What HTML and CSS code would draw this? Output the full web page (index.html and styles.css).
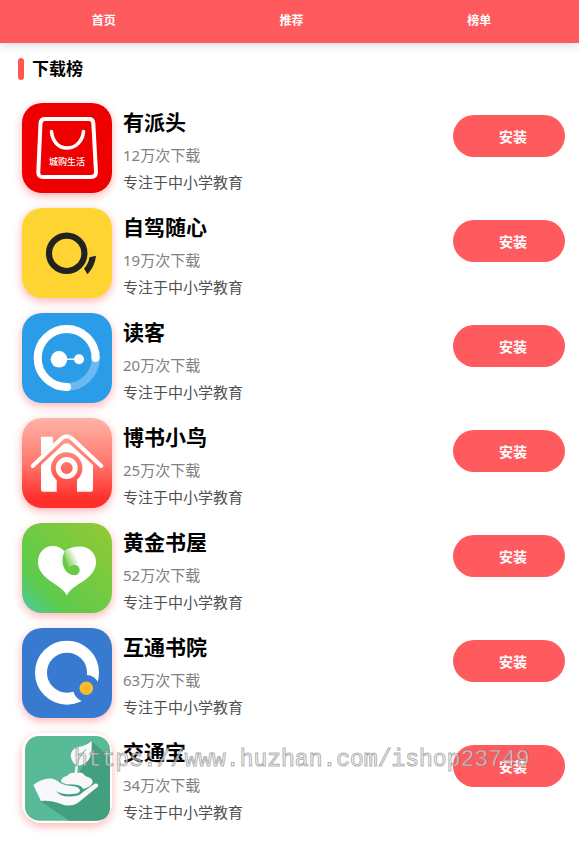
FILE: index.html
```html
<!DOCTYPE html>
<html lang="zh-CN">
<head>
    <meta charset="UTF-8">
    <meta name="viewport" content="width=device-width, initial-scale=1.0">
    <title>下载榜</title>
    <link rel="stylesheet" href="styles.css">
</head>
<body>
    <nav class="nav">
        <a href="#">首页</a>
        <a href="#">推荐</a>
        <a href="#">榜单</a>
    </nav>

    <main class="rank">
        <h1 class="rank-title">下载榜</h1>
        <ul class="app-list">
            <li class="app">
                <svg class="logo" viewBox="0 0 90 90">
                    <rect width="90" height="90" fill="#ee0000"/>
                    <path d="M23 16H67Q71 16 71.300 20L74 69Q74 74 69 74H21Q16 74 16.300 69L18.500 20Q19 16 23 16Z" fill="none" stroke="#fff" stroke-width="4"/>
                    <path d="M29.500 28.500C30.500 39 37 45 45 45S60.500 39 61.500 28.500" fill="none" stroke="#fff" stroke-width="3.500" stroke-linecap="round"/>
                    <text class="logo-text" x="45" y="62" text-anchor="middle">城购生活</text>
                </svg>
                <div class="info">
                    <h2 class="name">有派头</h2>
                    <p class="count">12万次下载</p>
                    <p class="desc">专注于中小学教育</p>
                </div>
                <button class="install">安装</button>
            </li>
            <li class="app">
                <svg class="logo" viewBox="0 0 90 90">
                    <rect width="90" height="90" fill="#fdd431"/>
                    <circle cx="44.700" cy="45.300" r="17.700" fill="none" stroke="#222" stroke-width="6.200"/>
                    <path d="M67.500 49.300L74 47.700Q73 58 65.500 66.300L62 60.700Q66.500 56 67.500 49.300Z" fill="#222"/>
                </svg>
                <div class="info">
                    <h2 class="name">自驾随心</h2>
                    <p class="count">19万次下载</p>
                    <p class="desc">专注于中小学教育</p>
                </div>
                <button class="install">安装</button>
            </li>
            <li class="app">
                <svg class="logo" viewBox="0 0 90 90">
                    <rect width="90" height="90" fill="#2b9ce8"/>
                    <circle cx="44.700" cy="45" r="29" fill="none" stroke="#6bb9ef" stroke-width="8"/>
                    <path d="M73.700 45A29 29 0 1 0 44.700 74" fill="none" stroke="#fff" stroke-width="8"/>
                    <circle cx="73.500" cy="45" r="4" fill="#fff"/>
                    <circle cx="45" cy="74" r="4" fill="#fff"/>
                    <path d="M37 46.300H57" stroke="#fff" stroke-width="1.500"/>
                    <circle cx="37" cy="46.300" r="8.300" fill="#fff"/>
                    <circle cx="57" cy="46.300" r="5" fill="#fff"/>
                </svg>
                <div class="info">
                    <h2 class="name">读客</h2>
                    <p class="count">20万次下载</p>
                    <p class="desc">专注于中小学教育</p>
                </div>
                <button class="install">安装</button>
            </li>
            <li class="app">
                <svg class="logo" viewBox="0 0 90 90">
                    <defs>
                        <linearGradient id="houseBg" x1="0" y1="0" x2="0" y2="1">
                            <stop offset="0" stop-color="#ffb3a7"/>
                            <stop offset="0.500" stop-color="#ff776d"/>
                            <stop offset="0.900" stop-color="#ff302a"/>
                        </linearGradient>
                        <mask id="houseHole">
                            <rect width="90" height="90" fill="#fff"/>
                            <circle cx="44.700" cy="50" r="15.700" fill="#000"/>
                            <rect x="34.700" y="60" width="20.300" height="16" fill="#000"/>
                        </mask>
                    </defs>
                    <rect width="90" height="90" fill="url(#houseBg)"/>
                    <path d="M19 18.700H31V26L19 37Z" fill="#fff"/>
                    <path d="M10.700 48L39.500 20.500Q44.700 16 50 20.500L79.300 48" fill="none" stroke="#fff" stroke-width="4" stroke-linecap="round"/>
                    <path d="M19 47L40 27.500Q44.700 23 49.500 27.500L71 47V71.500Q71 73.700 69 73.700H21Q19 73.700 19 71.500Z" fill="#fff" mask="url(#houseHole)"/>
                    <circle cx="44.700" cy="50" r="8.500" fill="none" stroke="#fff" stroke-width="5"/>
                </svg>
                <div class="info">
                    <h2 class="name">博书小鸟</h2>
                    <p class="count">25万次下载</p>
                    <p class="desc">专注于中小学教育</p>
                </div>
                <button class="install">安装</button>
            </li>
            <li class="app">
                <svg class="logo" viewBox="0 0 90 90">
                    <defs>
                        <linearGradient id="heartBg" x1="0" y1="1" x2="1" y2="0">
                            <stop offset="0" stop-color="#4bc9a6"/>
                            <stop offset="0.250" stop-color="#5dcb4d"/>
                            <stop offset="1" stop-color="#94c931"/>
                        </linearGradient>
                        <linearGradient id="curl" x1="0" y1="0.700" x2="0.700" y2="0.200">
                            <stop offset="0" stop-color="#6ac942"/>
                            <stop offset="1" stop-color="#fff"/>
                        </linearGradient>
                    </defs>
                    <rect width="90" height="90" fill="url(#heartBg)"/>
                    <path d="M44.700 72.700C43 67 34 62 27 57C19 51 16 45 16 39C16 30 22 23 30.500 23C36 23 40 25 42.500 28.500C46 25 52 23.500 58 23.500C67 23.500 74 30 74 39C74 45 71 51 63 57C55 62 47 67 44.700 72.700Z" fill="#fff"/>
                    <path d="M42.500 28.500C46 26 50 25 54 26L57 41Q51 41 47 46Q42 40 42.500 28.500Z" fill="url(#curl)"/>
                    <path d="M42.500 28.500C39 36 40 45 46 50Q49 52.500 53 52L48 46Q43 40 42.500 28.500Z" fill="#68c943"/>
                    <circle cx="52.500" cy="47" r="5.200" fill="#68c943"/>
                </svg>
                <div class="info">
                    <h2 class="name">黄金书屋</h2>
                    <p class="count">52万次下载</p>
                    <p class="desc">专注于中小学教育</p>
                </div>
                <button class="install">安装</button>
            </li>
            <li class="app">
                <svg class="logo" viewBox="0 0 90 90">
                    <rect width="90" height="90" fill="#387acf"/>
                    <circle cx="45" cy="44.700" r="26" fill="none" stroke="#fff" stroke-width="12"/>
                    <circle cx="64.300" cy="60.300" r="13.300" fill="#387acf"/>
                    <circle cx="64.300" cy="60.300" r="6.800" fill="#fdb92d"/>
                </svg>
                <div class="info">
                    <h2 class="name">互通书院</h2>
                    <p class="count">63万次下载</p>
                    <p class="desc">专注于中小学教育</p>
                </div>
                <button class="install">安装</button>
            </li>
            <li class="app">
                <svg class="logo" viewBox="0 0 90 90">
                    <rect width="90" height="90" fill="#fff"/>
                    <rect x="3" y="3" width="85" height="84.700" rx="14" fill="#59ba97"/>
                    <path d="M69.700 8L88 25V74Q88 87.700 74 87.700H47L18.700 68L45 55L60 35Z" fill="#43a07e"/>
                    <path d="M11.300 52Q20 45 29 45.500Q34 46 38 50Q43 53 51 53Q58 54 58 58Q57 61 50 61Q41 62 34 58Q38 64 49 63.500Q58 63 61 59L73 50.500Q77 50 76 53.500L57 69Q49 75 39 71Q28 67 19 68Z" fill="#f8f8fc"/>
                    <path d="M39 49Q39 44 45 43Q48 39 54 40Q61 38 63 43Q71 45 70.700 49Q70 54 61 56Q60 52 52 51.500Q44 52 39 49Z" fill="#f8f8fc"/>
                    <path d="M69.700 8C70 20 70 30 56 33L55 42H52.500L53.500 32C46 25 48 16 56 14Q64 13 69.700 8Z" fill="#f8f8fc"/>
                    <path d="M54 33Q56 25 64 16" fill="none" stroke="#59ba97" stroke-width="1"/>
                </svg>
                <div class="info">
                    <h2 class="name">交通宝</h2>
                    <p class="count">34万次下载</p>
                    <p class="desc">专注于中小学教育</p>
                </div>
                <button class="install">安装</button>
                <span class="watermark">https://www.huzhan.com/ishop23749</span>
            </li>
        </ul>
    </main>
</body>
</html>
```
FILE: styles.css
```css
body {
    margin: 0;
    background: #fff;
    color: #000;
    font-family: "Noto Sans", "Noto Sans CJK SC", sans-serif;
}
.nav {
    display: flex;
    padding: 0 6px 0 10px;
    background: #ff5b5f;
    box-shadow: 0 2px 10px rgba(0, 0, 0, 0.15);
}
.nav a {
    flex: 1;
    color: #fff;
    font-size: 12px;
    font-weight: bold;
    line-height: 42px;
    padding-bottom: 1px;
    text-align: center;
    text-decoration: none;
}
.rank {
    padding: 15px 14px 14px 22px;
}
.rank-title {
    display: flex;
    gap: 8px;
    margin: 0 0 23px -4px;
    font-size: 17px;
    line-height: 22px;
}
.rank-title::before {
    content: "";
    width: 6px;
    border-radius: 3px;
    background: #ff574d;
}
.app-list {
    display: flex;
    flex-direction: column;
    gap: 11px;
    margin: 0;
    padding: 0;
    list-style: none;
}
.app {
    position: relative;
    display: flex;
    align-items: flex-start;
}
.logo {
    width: 90px;
    height: 90px;
    border-radius: 20px;
    box-shadow: 0 3px 10px rgba(255, 0, 0, 0.3);
}
.logo-text {
    fill: #fff;
    font-size: 9px;
    font-weight: 500;
}
.info {
    flex: 1;
    margin-left: 11px;
}
.name {
    margin: 0 0 2px;
    font-size: 21px;
    line-height: 38px;
}
.count {
    margin: 0;
    color: #808080;
    font-size: 15px;
    line-height: 24px;
}
.desc {
    margin: 0;
    color: #505050;
    font-size: 15px;
    line-height: 30px;
}
.install {
    width: 112px;
    height: 42px;
    margin-top: 12px;
    padding: 0 0 0 8px;
    border: none;
    border-radius: 21px;
    background: #ff5b5f;
    color: #fff;
    font-family: inherit;
    font-size: 14px;
    font-weight: bold;
    cursor: pointer;
}
.watermark {
    position: absolute;
    top: 12px;
    left: 52px;
    color: rgba(255, 255, 255, 0.6);
    font-family: "Liberation Mono", monospace;
    font-size: 23px;
    line-height: 30px;
    -webkit-text-stroke: 1px rgba(120, 120, 120, 0.6);
    pointer-events: none;
}
```
